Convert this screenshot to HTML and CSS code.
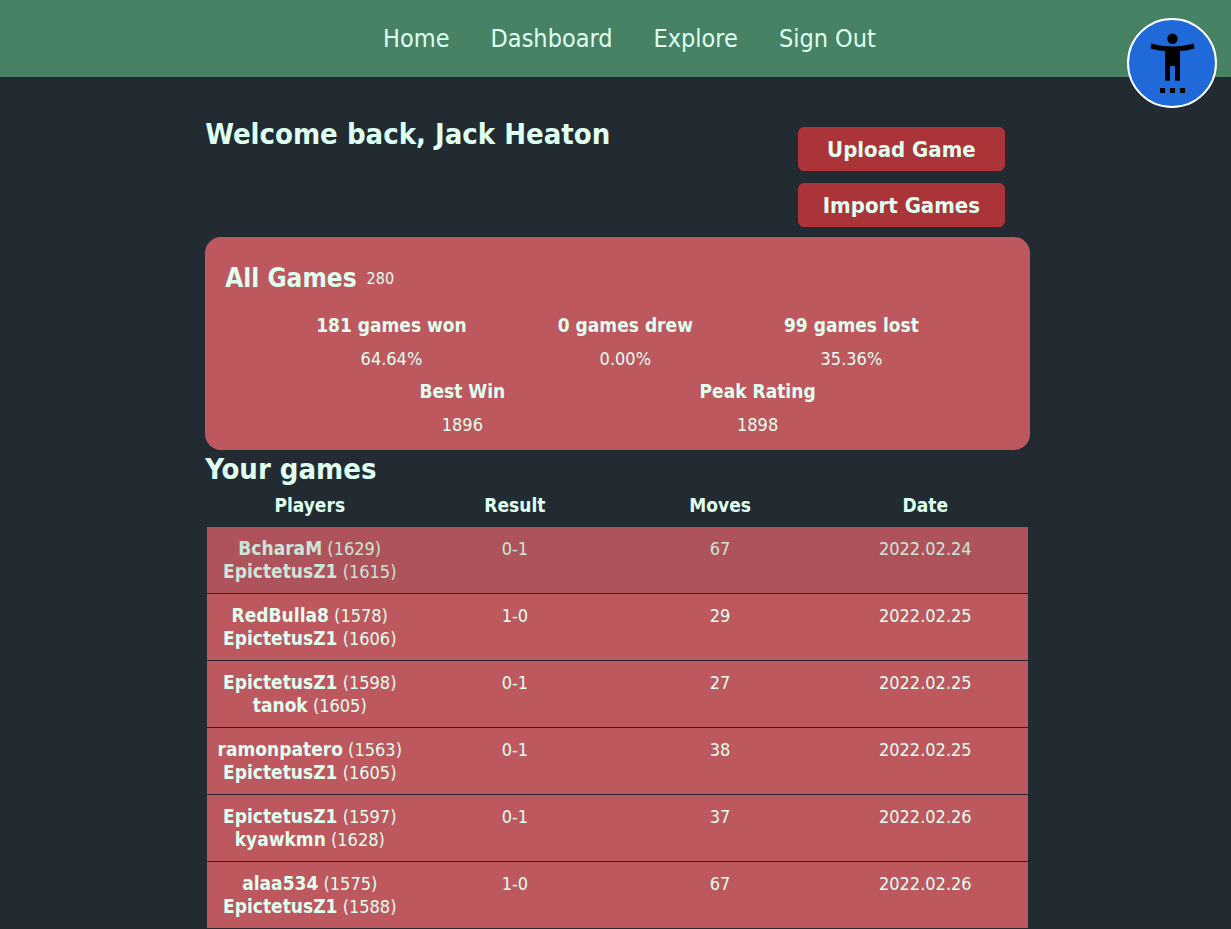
FILE: index.html
```
<!DOCTYPE html>
<html lang="en">
<head>
<meta charset="utf-8">
<meta name="viewport" content="width=device-width, initial-scale=1">
<title>Dashboard</title>
<link rel="stylesheet" href="styles.css">
</head>
<body>
<nav class="navbar" aria-label="Main">
  <a href="#">Home</a>
  <a href="#">Dashboard</a>
  <a href="#">Explore</a>
  <a href="#">Sign Out</a>
</nav>
<button class="accessibility" type="button" aria-label="Accessibility options">
  <svg viewBox="0 0 86 86" aria-hidden="true">
    <circle cx="43.5" cy="18.8" r="5.2"/>
    <path d="M22.500 23.500 C36 27.500 51 27.500 64.500 23.500 L65.500 28.500 Q58.500 30.500 51 31 V60.800 H46 V46 H41 V60.800 H36 V31 Q28.500 30.500 21.500 28.500Z"/>
    <path d="M31 68h5v5h-5zM41 68h5v5h-5zM51 68h5v5h-5z"/>
  </svg>
</button>
<main class="dashboard">
  <header class="welcome">
    <h1>Welcome back, Jack Heaton</h1>
    <div class="actions">
      <button type="button">Upload Game</button>
      <button type="button">Import Games</button>
    </div>
  </header>
  <section class="summary">
    <div class="summary-title"><h2>All Games</h2><span>280</span></div>
    <div class="stats">
      <div><h3>181 games won</h3><p>64.64%</p></div>
      <div><h3>0 games drew</h3><p>0.00%</p></div>
      <div><h3>99 games lost</h3><p>35.36%</p></div>
    </div>
    <div class="stats">
      <div><h3>Best Win</h3><p>1896</p></div>
      <div><h3>Peak Rating</h3><p>1898</p></div>
    </div>
  </section>
  <section class="games">
    <h1>Your games</h1>
    <table>
      <thead><tr><th scope="col">Players</th><th scope="col">Result</th><th scope="col">Moves</th><th scope="col">Date</th></tr></thead>
      <tbody>
        <tr class="active"><td><b>BcharaM</b> (1629)<br><b>EpictetusZ1</b> (1615)</td><td>0-1</td><td>67</td><td>2022.02.24</td></tr>
        <tr><td><b>RedBulla8</b> (1578)<br><b>EpictetusZ1</b> (1606)</td><td>1-0</td><td>29</td><td>2022.02.25</td></tr>
        <tr><td><b>EpictetusZ1</b> (1598)<br><b>tanok</b> (1605)</td><td>0-1</td><td>27</td><td>2022.02.25</td></tr>
        <tr><td><b>ramonpatero</b> (1563)<br><b>EpictetusZ1</b> (1605)</td><td>0-1</td><td>38</td><td>2022.02.25</td></tr>
        <tr><td><b>EpictetusZ1</b> (1597)<br><b>kyawkmn</b> (1628)</td><td>0-1</td><td>37</td><td>2022.02.26</td></tr>
        <tr><td><b>alaa534</b> (1575)<br><b>EpictetusZ1</b> (1588)</td><td>1-0</td><td>67</td><td>2022.02.26</td></tr>
      </tbody>
    </table>
  </section>
</main>
</body>
</html>
```
FILE: styles.css
```
* { box-sizing: border-box; }
body {
  margin: 0;
  background: #232b32;
  color: #dffff0;
  font: 18px/23px "DejaVu Sans Condensed", "Noto Sans", sans-serif;
}
h1, h2, h3, p { margin: 0; }
h3, th, b { font-size: 19px; line-height: 23px; }
b { line-height: 20px; }
.navbar {
  display: flex;
  justify-content: center;
  gap: 41px;
  padding: 22px 0 22px 28px;
  background: #478264;
  font-size: 25px;
  line-height: 33px;
}
.navbar a { color: inherit; text-decoration: none; }
.accessibility {
  position: fixed;
  top: 18px;
  right: 14px;
  width: 90px;
  height: 90px;
  padding: 0;
  border: 2px solid #fff;
  border-radius: 50%;
  background: #2069d8;
  cursor: pointer;
}
.accessibility svg { display: block; width: 100%; }
.dashboard {
  width: 67%;
  margin-left: calc(100% / 6);
  padding-top: 38px;
}
h1 { font-size: 29px; line-height: 38px; }
.welcome { display: flex; justify-content: space-between; }
.actions {
  display: flex;
  flex-direction: column;
  gap: 12px;
  width: 207px;
  margin: 12px 25px 10px 0;
}
.actions button {
  height: 44px;
  padding: 0;
  border: 1px solid #b23338;
  border-radius: 6px;
  background: #aa3438;
  color: inherit;
  font: inherit;
  font-size: 22px;
  font-weight: 700;
  cursor: pointer;
}
.summary {
  padding: 20px 20px 9px;
  border-radius: 16px;
  background: #bd585f;
}
.summary-title { display: flex; align-items: center; gap: 10px; height: 43px; margin-bottom: 9px; }
.summary-title h2 { font-size: 26px; line-height: 33px; }
.summary-title span { font-size: 16px; }
.stats { display: flex; justify-content: space-evenly; text-align: center; }
.stats h3, .stats p { padding: 5px 0; }
.games table {
  width: calc(100% - 4px);
  margin: 0 2px;
  border-collapse: collapse;
  table-layout: fixed;
  text-align: center;
}
.games th { padding: 6px 0 10px; }
.games td { padding: 10px 0; vertical-align: top; border-bottom: 1px solid #232b32; }
.games tbody tr { background: #bd585f; }
.games tbody .active { background: #ae535b; color: #cbe6d9; }
```
